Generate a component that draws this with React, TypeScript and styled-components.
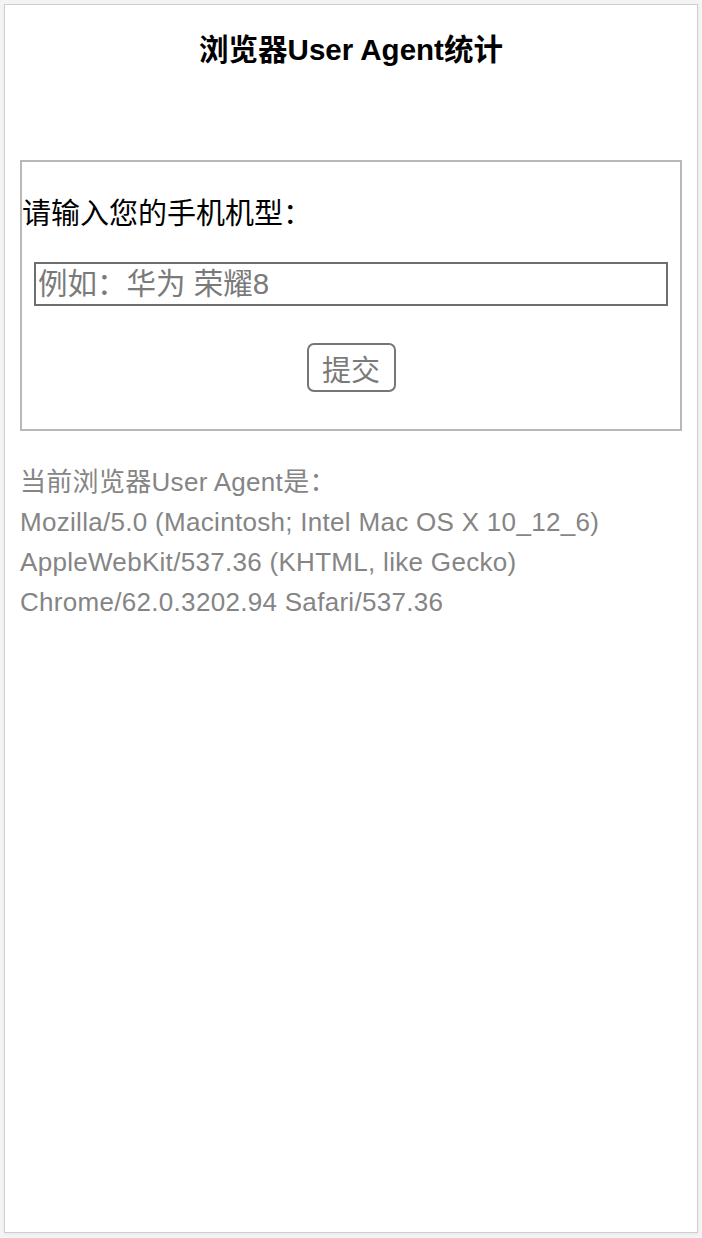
import React from "react";
import styled, { createGlobalStyle } from "styled-components";

const Global = createGlobalStyle`
  html, body {
    margin: 0;
    padding: 0;
    background: #f4f4f4;
  }
  * { box-sizing: border-box; }
  body {
    font-family: "Liberation Sans", "Noto Sans CJK SC", sans-serif;
  }
`;

const Frame = styled.div`
  margin: 4px 4px 5px 4px;
  height: 1229px;
  background: #ffffff;
  border: 1px solid #cfcfcf;
  box-shadow: 0 1px 3px rgba(0, 0, 0, 0.06);
  padding: 0 15px;
  display: flex;
  flex-direction: column;
`;

const Title = styled.h1`
  margin: 0;
  padding-top: 25px;
  line-height: 40px;
  font-size: 29.5px;
  font-weight: bold;
  text-align: center;
  color: #000;
`;

const FormBox = styled.form`
  margin-top: 90px;
  border: 2px solid #b8b8b8;
  display: flex;
  flex-direction: column;
  padding-bottom: 37px;
`;

const Label = styled.label`
  margin-top: 32px;
  line-height: 40px;
  font-size: 29px;
  color: #000;
`;

const Input = styled.input`
  margin: 28px 12px 0 12px;
  height: 44px;
  border: 2px solid #6e6e6e;
  padding: 0 2px;
  font-family: inherit;
  font-size: 29.5px;
  color: #333;
  outline: none;
  &::placeholder {
    color: #7a7a7a;
  }
`;

const SubmitButton = styled.button`
  align-self: center;
  margin-top: 37px;
  width: 89px;
  height: 49px;
  border: 2px solid #767676;
  border-radius: 7px;
  background: #fff;
  font-family: inherit;
  font-size: 29px;
  color: #7a7a7a;
  padding: 0;
`;

const UAText = styled.div`
  margin-top: 31px;
  font-size: 26px;
  letter-spacing: 0.3px;
  line-height: 40px;
  color: #858585;
`;

export default function App() {
  return (
    <>
      <Global />
      <Frame>
        <Title>浏览器User Agent统计</Title>
        <FormBox onSubmit={(e) => e.preventDefault()}>
          <Label htmlFor="model">请输入您的手机机型：</Label>
          <Input id="model" placeholder="例如：华为 荣耀8" />
          <SubmitButton type="submit">提交</SubmitButton>
        </FormBox>
        <UAText>
          当前浏览器User Agent是：
          <br />
          Mozilla/5.0 (Macintosh; Intel Mac OS X 10_12_6)
          <br />
          AppleWebKit/537.36 (KHTML, like Gecko)
          <br />
          Chrome/62.0.3202.94 Safari/537.36
        </UAText>
      </Frame>
    </>
  );
}
